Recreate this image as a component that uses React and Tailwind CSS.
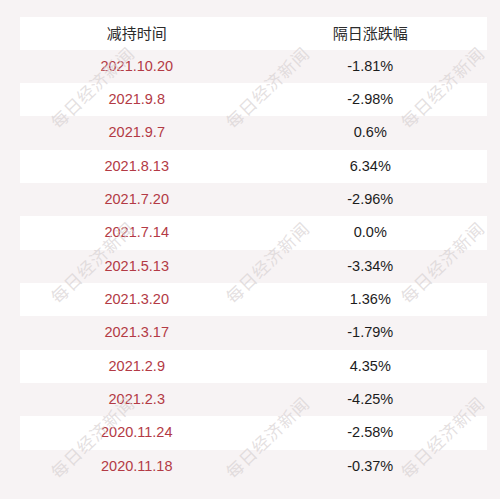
const rows = [
  ["2021.10.20", "-1.81%"],
  ["2021.9.8", "-2.98%"],
  ["2021.9.7", "0.6%"],
  ["2021.8.13", "6.34%"],
  ["2021.7.20", "-2.96%"],
  ["2021.7.14", "0.0%"],
  ["2021.5.13", "-3.34%"],
  ["2021.3.20", "1.36%"],
  ["2021.3.17", "-1.79%"],
  ["2021.2.9", "4.35%"],
  ["2021.2.3", "-4.25%"],
  ["2020.11.24", "-2.58%"],
  ["2020.11.18", "-0.37%"],
];

const marks = [];
for (const y of [87, 262, 437]) {
  for (const x of [92, 267, 442]) {
    marks.push({ x, y });
  }
}

export default function App() {
  return (
    <div className="relative w-[500px] h-[499px] overflow-hidden bg-[#f7f3f4] pt-[16.5px] pl-5 pr-[13px] font-['Liberation_Sans','Noto_Sans_CJK_SC',sans-serif]">
      {/* header */}
      <div className="grid grid-cols-2 h-[33.33px] items-center bg-white text-[15px] text-[#2b2b2b] font-['Noto_Sans_CJK_SC',sans-serif]">
        <div className="text-center">减持时间</div>
        <div className="text-center">隔日涨跌幅</div>
      </div>

      {/* rows */}
      {rows.map(([date, pct], i) => (
        <div
          key={date}
          className={
            i % 2 === 1
              ? "grid grid-cols-2 h-[33.33px] items-center bg-white text-[14.5px]"
              : "grid grid-cols-2 h-[33.33px] items-center text-[14.5px]"
          }
        >
          <div className="text-center text-[#b33a45]">{date}</div>
          <div className="text-center text-[#1c1c1c]">{pct}</div>
        </div>
      ))}

      {/* watermark */}
      {marks.map((m, i) => (
        <div
          key={i}
          className="pointer-events-none absolute -translate-x-1/2 -translate-y-1/2 -rotate-[44deg] whitespace-nowrap text-[17px] tracking-[1px] text-[#d8d2d3]/70 font-['Noto_Sans_CJK_SC',serif]"
          style={{ left: m.x, top: m.y }}
        >
          每日经济新闻
        </div>
      ))}
    </div>
  );
}
